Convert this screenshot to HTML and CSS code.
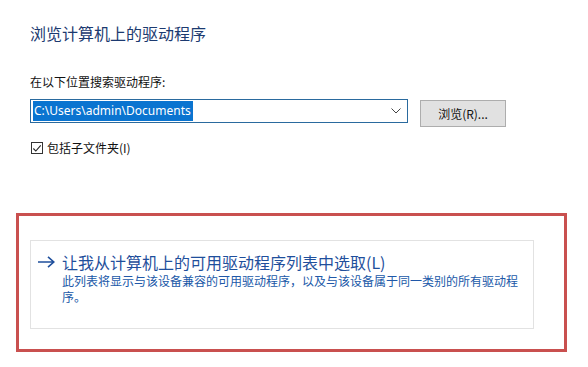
FILE: index.html
```html
<!DOCTYPE html>
<html lang="zh-CN">
<head>
<meta charset="utf-8">
<link rel="stylesheet" href="styles.css">
</head>
<body>
<div class="page">
  <h1 class="title">浏览计算机上的驱动程序</h1>
  <div class="label">在以下位置搜索驱动程序:</div>
  <div class="row">
    <div class="combo">
      <span class="sel">C:\Users\admin\Documents</span>
      <svg class="chev" width="10" height="6" viewBox="0 0 10 6"><path d="M0.5 0.5 L5 5 L9.5 0.5" fill="none" stroke="#444" stroke-width="1"/></svg>
    </div>
    <button class="btn">浏览(R)...</button>
  </div>
  <div class="check">
    <span class="box"><svg width="11" height="11" viewBox="0 0 11 11"><path d="M1.5 5.5 L4.2 8.3 L9.6 2" fill="none" stroke="#222" stroke-width="1.2"/></svg></span>
    <span>包括子文件夹(I)</span>
  </div>
  <div class="highlight">
    <div class="card">
      <div class="link-row">
        <svg class="arrow" width="17" height="12" viewBox="0 0 17 12"><path d="M0 6 H15.5 M10 0.8 L15.8 6 L10 11.2" fill="none" stroke="#1f4f9c" stroke-width="1.6"/></svg>
        <span class="link">让我从计算机上的可用驱动程序列表中选取(L)</span>
      </div>
      <div class="desc">此列表将显示与该设备兼容的可用驱动程序，以及与该设备属于同一类别的所有驱动程序。</div>
    </div>
  </div>
</div>
</body>
</html>
```

FILE: styles.css
```css
html, body {
  margin: 0;
  padding: 0;
  background: #ffffff;
}
body {
  width: 588px;
  height: 367px;
  overflow: hidden;
  font-family: "Noto Sans CJK SC", "Liberation Sans", sans-serif;
}
.page {
  display: flex;
  flex-direction: column;
  align-items: flex-start;
  padding: 23px 0 0 30px;
}
.title {
  margin: 0;
  font-weight: normal;
  font-size: 16px;
  line-height: 20px;
  color: #1c3a70;
}
.label {
  margin-top: 31px;
  font-size: 12px;
  line-height: 16px;
  color: #111;
}
.row {
  margin-top: 9px;
  display: flex;
  align-items: flex-start;
  gap: 12px;
}
.combo {
  box-sizing: border-box;
  width: 378px;
  height: 24px;
  border: 1px solid #2a6a9e;
  display: flex;
  align-items: center;
  justify-content: space-between;
  padding: 0 6px 0 2px;
}
.sel {
  background: #0a74d0;
  color: #fff;
  font-family: "Noto Sans", "Liberation Sans", sans-serif;
  font-size: 12px;
  line-height: 20px;
  padding: 0 2px 0 1px;
}
.btn {
  box-sizing: border-box;
  margin-top: 1px;
  width: 86px;
  height: 27px;
  background: #e1e1e1;
  border: 1px solid #adadad;
  font-family: "Noto Sans CJK SC", "Liberation Sans", sans-serif;
  font-size: 12px;
  color: #111;
  padding: 0;
}
.check {
  margin-top: 13px;
  margin-left: 1px;
  display: flex;
  align-items: center;
  gap: 4px;
  font-size: 12px;
  line-height: 16px;
  color: #111;
}
.box {
  box-sizing: border-box;
  width: 12px;
  height: 12px;
  border: 1px solid #333;
  display: flex;
  align-items: center;
  justify-content: center;
}
.highlight {
  box-sizing: border-box;
  margin-top: 57px;
  margin-left: -14px;
  width: 551px;
  height: 139px;
  border: 3px solid #c9504f;
  padding: 24px 0 0 11px;
}
.card {
  box-sizing: border-box;
  width: 504px;
  height: 89px;
  border: 1px solid #e2e2e2;
  padding: 10px 0 0 7px;
}
.link-row {
  display: flex;
  align-items: center;
  gap: 7px;
}
.arrow {
  display: block;
}
.link {
  font-size: 16px;
  line-height: 22px;
  color: #1f4f9c;
}
.desc {
  margin-left: 24px;
  width: 462px;
  font-size: 12px;
  line-height: 16px;
  color: #2058a8;
}
```
